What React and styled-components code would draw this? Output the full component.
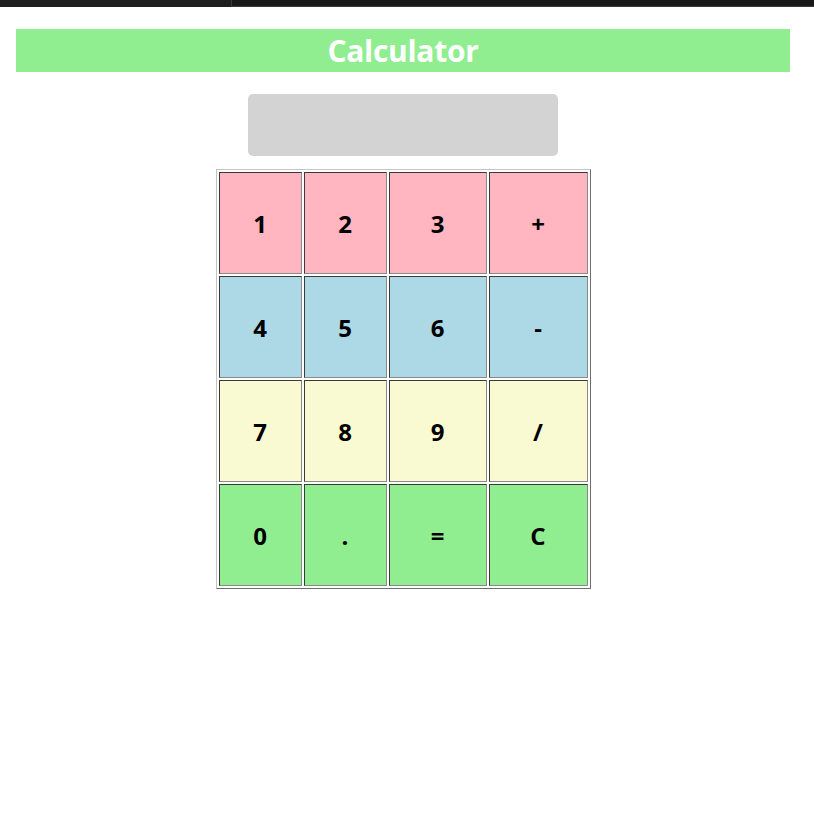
import React, { useState } from 'react'
import styled, { createGlobalStyle } from 'styled-components'

const GlobalStyle = createGlobalStyle`
  html, body {
    margin: 0;
    background: #ffffff;
    font-family: 'Open Sans', 'Noto Sans', sans-serif;
  }
`

const TopStrip = styled.div`
  display: flex;
  height: 7px;
`

const StripLeft = styled.div`
  width: 231px;
  background-color: #1f1f1f;
`

const StripRight = styled.div`
  flex: 1;
  background-color: #181818;
  border-left: 1px solid #3a3a3a;
  border-bottom: 1px solid #3a3a3a;
`

const Page = styled.div`
  width: 774px;
  padding: 22px 0 0 16px;
  display: flex;
  flex-flow: column nowrap;
  align-items: center;
`

const Title = styled.h1`
  width: 100%;
  height: 43px;
  margin: 0;
  background-color: #90ee90;
  color: #ffffff;
  font-size: 30px;
  font-weight: 700;
  line-height: 43px;
  text-align: center;
  letter-spacing: -0.3px;
`

const Display = styled.div`
  margin-top: 22px;
  width: 310px;
  height: 62px;
  border-radius: 5px;
  background-color: #d3d3d3;
  box-sizing: border-box;
  padding: 0 12px;
  font-size: 24px;
  line-height: 62px;
  text-align: right;
`

const Keypad = styled.div`
  margin-top: 13px;
  display: grid;
  grid-template-columns: 83px 83px 98px 99px;
  grid-auto-rows: 102px;
  gap: 2px;
  padding: 2px;
  border: 1px solid;
  border-color: #c4c4c4 #6e6e6e #6e6e6e #c4c4c4;
`

const Key = styled.button`
  box-sizing: border-box;
  margin: 0;
  padding: 0;
  border: 1px solid;
  border-color: #3a3a3a #8a8a8a #8a8a8a #3a3a3a;
  background-color: ${({ bg }) => bg};
  color: #000000;
  font-family: 'Open Sans', 'Noto Sans', sans-serif;
  font-size: 24px;
  font-weight: 700;
  cursor: pointer;
  display: flex;
  align-items: center;
  justify-content: center;
`

const ROWS = [
  { bg: '#ffb6c1', keys: ['1', '2', '3', '+'] },
  { bg: '#add8e6', keys: ['4', '5', '6', '-'] },
  { bg: '#fafad2', keys: ['7', '8', '9', '/'] },
  { bg: '#90ee90', keys: ['0', '.', '=', 'C'] }
]

const App = () => {
  const [value, setValue] = useState('')

  const handleKey = (key) => {
    if (key === 'C') return setValue('')
    if (key === '=') {
      try {
        // eslint-disable-next-line no-new-func
        const result = Function(`return (${value})`)()
        setValue(String(result))
      } catch (e) {
        setValue('Error')
      }
      return
    }
    setValue((prev) => prev + key)
  }

  return (
    <>
      <GlobalStyle />
      <TopStrip>
        <StripLeft />
        <StripRight />
      </TopStrip>
      <Page>
        <Title>Calculator</Title>
        <Display>{value}</Display>
        <Keypad>
          {ROWS.map(({ bg, keys }) =>
            keys.map((key) => (
              <Key key={key} bg={bg} onClick={() => handleKey(key)}>
                {key}
              </Key>
            ))
          )}
        </Keypad>
      </Page>
    </>
  )
}

export default App
